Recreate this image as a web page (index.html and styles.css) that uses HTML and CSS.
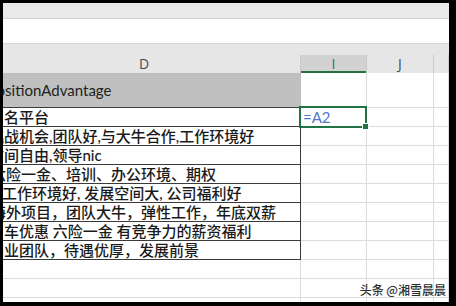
FILE: index.html
```html
<!DOCTYPE html>
<html lang="zh">
<head>
<meta charset="utf-8">
<link rel="stylesheet" href="styles.css">
</head>
<body>
<div class="screen">
  <div class="ribbon"></div>
  <div class="formula"></div>
  <div class="gap"></div>
  <div class="sheet">
    <div class="row colhead">
      <div class="c d">D</div><div class="c i sel">I</div><div class="c j">J</div><div class="c k"></div>
    </div>
    <div class="row r1">
      <div class="c d hdr">PositionAdvantage</div><div class="c i"></div><div class="c j"></div><div class="c k"></div>
    </div>
    <div class="row">
      <div class="c d t">知名平台</div><div class="c i active"><span class="ref">=A2</span></div><div class="c j"></div><div class="c k"></div>
    </div>
    <div class="row">
      <div class="c d t">挑战机会,团队好,与大牛合作,工作环境好</div><div class="c i"></div><div class="c j"></div><div class="c k"></div>
    </div>
    <div class="row">
      <div class="c d t">时间自由,领导nic</div><div class="c i"></div><div class="c j"></div><div class="c k"></div>
    </div>
    <div class="row">
      <div class="c d t shift">六险一金、培训、办公环境、期权</div><div class="c i"></div><div class="c j"></div><div class="c k"></div>
    </div>
    <div class="row">
      <div class="c d t indent">工作环境好, 发展空间大, 公司福利好</div><div class="c i"></div><div class="c j"></div><div class="c k"></div>
    </div>
    <div class="row">
      <div class="c d t shift">海外项目，团队大牛，弹性工作，年底双薪</div><div class="c i"></div><div class="c j"></div><div class="c k"></div>
    </div>
    <div class="row">
      <div class="c d t">用车优惠 六险一金 有竞争力的薪资福利</div><div class="c i"></div><div class="c j"></div><div class="c k"></div>
    </div>
    <div class="row">
      <div class="c d t">创业团队，待遇优厚，发展前景</div><div class="c i"></div><div class="c j"></div><div class="c k"></div>
    </div>
    <div class="row">
      <div class="c d"></div><div class="c i"></div><div class="c j"></div><div class="c k"></div>
    </div>
    <div class="row">
      <div class="c d"></div><div class="c i"></div><div class="c j"></div><div class="c k"></div>
    </div>
    <div class="row">
      <div class="c d"></div><div class="c i"></div><div class="c j"></div><div class="c k"></div>
    </div>
  </div>
  <div class="watermark">头条 @湘雪晨晨</div>
</div>
</body>
</html>
```

FILE: styles.css
```css
html, body {
  margin: 0;
  padding: 0;
  background: #000;
  width: 456px;
  height: 306px;
  overflow: hidden;
}

.screen {
  position: relative;
  margin: 3px 7px 0 3px;
  width: 446px;
  height: 299px;
  background: #fff;
  overflow: hidden;
  display: flex;
  flex-direction: column;
  font-family: Lato, "Noto Sans CJK SC", sans-serif;
  color: #1a1a1a;
}

.ribbon {
  flex: none;
  height: 15px;
  background: #e9e9e9;
  border-bottom: 1px solid #d2d2d2;
}

.formula {
  flex: none;
  height: 24px;
  background: #fff;
  border-bottom: 1px solid #d8d8d8;
}

.gap {
  flex: none;
  height: 11px;
  background: #e6e6e6;
}

.sheet {
  flex: none;
  margin-left: -15px;
}

.row {
  display: grid;
  grid-template-columns: 313px 66px 67px 1fr;
  height: 19px;
}

.c {
  box-sizing: border-box;
  border-right: 1px solid #dcdcdc;
  border-bottom: 1px solid #dcdcdc;
  min-width: 0;
  white-space: nowrap;
  overflow: hidden;
}

.colhead {
  height: 18px;
  background: #e6e6e6;
}

.colhead .c {
  border-bottom: none;
  border-right: 1px solid #c9c9c9;
  display: flex;
  align-items: center;
  justify-content: center;
  font-family: "Open Sans", "Noto Sans", sans-serif;
  font-size: 14px;
  color: #4a4a4a;
  line-height: 18px;
}

.colhead .c.sel {
  background: #d2d2d2;
  color: #217346;
  box-shadow: inset 0 -2px 0 #217346;
}

.r1 {
  height: 35px;
}

.hdr {
  background: #c0c0c0;
  border-bottom: 1px solid #3c3c3c !important;
  border-right: 1px solid #bdbdbd !important;
  display: flex;
  align-items: center;
  padding-left: 0;
  font-size: 15px;
  color: #222;
}

.t {
  border-bottom: 1px solid #3a3a3a !important;
  border-right: 1px solid #3a3a3a !important;
  display: flex;
  align-items: flex-end;
  padding-left: 1px;
  font-size: 15px;
  font-weight: 500;
  line-height: 18px;
  color: #1a1a1a;
}

.t.shift {
  padding-left: 3px;
}

.t.indent {
  padding-left: 14px;
}

.active {
  position: relative;
  overflow: visible;
}

.active::after {
  content: "";
  position: absolute;
  left: -2px;
  top: -2px;
  right: -1px;
  bottom: -2px;
  border: 2px solid #217346;
}

.active::before {
  content: "";
  position: absolute;
  right: -3px;
  bottom: -4px;
  width: 5px;
  height: 5px;
  background: #217346;
  border: 1px solid #fff;
  z-index: 2;
}

.ref {
  display: block;
  padding-left: 2px;
  font-size: 15px;
  line-height: 18px;
  color: #4f78c8;
}

.watermark {
  position: absolute;
  right: 3px;
  bottom: 5px;
  font-family: "Noto Sans CJK SC", sans-serif;
  font-size: 12px;
  font-weight: 500;
  line-height: 14px;
  color: #2e2e2e;
  text-shadow: 0 0 2px #fff, 0 0 1px #fff;
}
```
